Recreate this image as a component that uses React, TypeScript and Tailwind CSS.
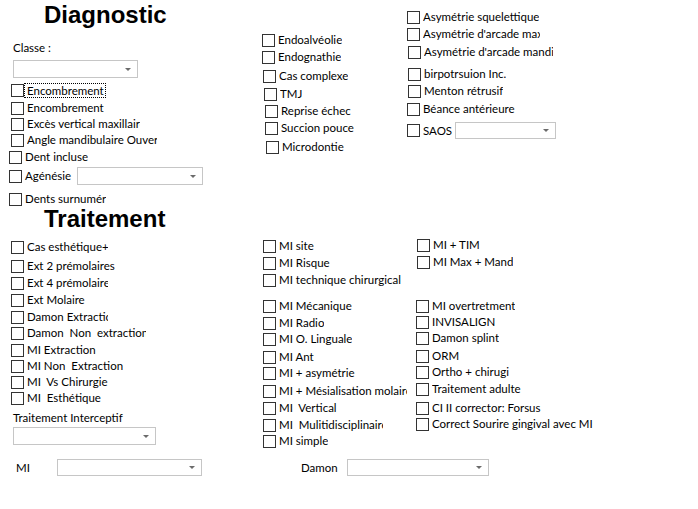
import React from 'react';

const ui = "font-['Lato',sans-serif] text-[11.5px] leading-[16px] text-black";

function Box() {
  return <span className="box-border size-[13px] shrink-0 border border-[#333333] bg-white" />;
}

function Combo({ className = '' }: { className?: string }) {
  return (
    <div className={`box-border flex shrink-0 items-center justify-end border border-[#c6c6c6] bg-white pr-[6px] ${className}`}>
      <span className="h-0 w-0 border-x-[3px] border-t-[3px] border-x-transparent border-t-[#6b6b6b]" />
    </div>
  );
}

function Check({ label, className = '', w = '', focused = false }: { label: string; className?: string; w?: string; focused?: boolean }) {
  return (
    <div className={`flex h-[16px] items-center ${className}`}>
      <Box />
      {focused ? (
        <span className="box-border h-[15px] whitespace-pre border border-dotted border-black pl-[2px] pr-[1px] leading-[13px]">{label}</span>
      ) : (
        <span className={`ml-[3px] overflow-hidden whitespace-pre ${w}`}>{label}</span>
      )}
    </div>
  );
}

function Title({ children }: { children: string }) {
  return (
    <div className="ml-[35px] h-[24px] font-['Liberation_Sans',Arial,sans-serif] text-[24px] font-bold leading-[24px]">
      {children}
    </div>
  );
}

export default function App() {
  return (
    <div className={`h-[509px] w-[698px] overflow-hidden bg-white ${ui}`}>
      {/* Diagnostic */}
      <div className="flex h-[207px] items-start">
        <div className="flex w-[262px] shrink-0 flex-col pl-[9px]">
          <div className="mt-[3px]"><Title>Diagnostic</Title></div>
          <div className="ml-[4px] mt-[13px] h-[16px]">Classe :</div>
          <Combo className="ml-[4px] mt-[4px] h-[18px] w-[125px]" />
          <Check label="Encombrement" focused className="ml-[2px] mt-[4px]" />
          <Check label="Encombrement" className="ml-[2px] mt-[2px]" />
          <Check label="Excès vertical maxillaire" w="w-[113px]" className="ml-[2px]" />
          <Check label="Angle mandibulaire Ouverte" w="w-[130px]" className="ml-[2px]" />
          <Check label="Dent incluse" className="mt-[1px]" />
          <div className="mt-[2px] flex h-[18px] items-center">
            <Box />
            <span className="ml-[3px] w-[52px] shrink-0">Agénésie</span>
            <Combo className="h-[18px] w-[126px]" />
          </div>
          <Check label="Dents surnuméraires" w="w-[81px]" className="mt-[6px]" />
        </div>

        <div className="flex w-[145px] shrink-0 flex-col">
          <Check label="Endoalvéolie" className="mt-[32px]" />
          <Check label="Endognathie" className="mt-[1px]" />
          <Check label="Cas complexe" className="ml-[1px] mt-[3px]" />
          <Check label="TMJ" className="ml-[2px] mt-[2px]" />
          <Check label="Reprise échec" className="ml-[3px] mt-[1px]" />
          <Check label="Succion pouce" className="ml-[3px] mt-[1px]" />
          <Check label="Microdontie" className="ml-[4px] mt-[3px]" />
        </div>

        <div className="flex flex-col">
          <Check label="Asymétrie squelettique" className="mt-[9px]" />
          <Check label="Asymétrie d'arcade maxillaire" w="w-[117px]" className="mt-[1px]" />
          <Check label="Asymétrie d'arcade mandibulaire" w="w-[129px]" className="ml-[1px] mt-[2px]" />
          <Check label="birpotrsuion Inc." className="ml-[1px] mt-[6px]" />
          <Check label="Menton rétrusif" className="ml-[1px] mt-[1px]" />
          <Check label="Béance antérieure" className="mt-[2px]" />
          <div className="mt-[5px] flex h-[17px] items-center">
            <Box />
            <span className="ml-[3px] w-[32px] shrink-0">SAOS</span>
            <Combo className="h-[17px] w-[101px]" />
          </div>
        </div>
      </div>

      {/* Traitement */}
      <div className="flex items-start">
        <div className="flex w-[263px] shrink-0 flex-col pl-[9px]">
          <Title>Traitement</Title>
          <Check label="Cas esthétique+" w="w-[81px]" className="ml-[2px] mt-[8px]" />
          <Check label="Ext 2 prémolaires" className="ml-[2px] mt-[3px]" />
          <Check label="Ext 4 prémolaires" w="w-[81px]" className="ml-[2px] mt-[1px]" />
          <Check label="Ext Molaire" className="ml-[2px] mt-[1px]" />
          <Check label="Damon Extraction" w="w-[81px]" className="ml-[2px] mt-[1px]" />
          <Check label="Damon  Non  extraction" w="w-[119px]" className="ml-[2px]" />
          <Check label="MI Extraction" className="ml-[2px] mt-[1px]" />
          <Check label="MI Non  Extraction" className="ml-[2px]" />
          <Check label="MI  Vs Chirurgie" className="ml-[2px]" />
          <Check label="MI  Esthétique" className="ml-[2px]" />
          <div className="ml-[4px] mt-[4px] h-[16px]">Traitement Interceptif</div>
          <Combo className="ml-[4px] mt-[1px] h-[18px] w-[143px]" />
          <div className="ml-[7px] mt-[14px] flex h-[17px] items-center">
            <span className="w-[41px] shrink-0">MI</span>
            <Combo className="h-[17px] w-[145px]" />
          </div>
        </div>

        <div className="flex w-[153px] shrink-0 flex-col">
          <Check label="MI site" className="mt-[31px]" />
          <Check label="MI Risque" className="mt-[1px]" />
          <Check label="MI technique chirurgicale" w="w-[122px]" className="mt-[1px]" />
          <Check label="MI Mécanique" className="mt-[10px]" />
          <Check label="MI Radio" className="mt-[1px]" />
          <Check label="MI O. Linguale" />
          <Check label="MI Ant" className="mt-[2px]" />
          <Check label="MI + asymétrie" />
          <Check label="MI + Mésialisation molaire" w="w-[128px]" className="mt-[2px]" />
          <Check label="MI  Vertical" className="mt-[1px]" />
          <Check label="MI  Mulitidisciplinaire" w="w-[104px]" className="mt-[1px]" />
          <Check label="MI simple" />
          <div className="ml-[38px] mt-[10px] flex h-[17px] items-center">
            <span className="w-[46px] shrink-0">Damon</span>
            <Combo className="h-[17px] w-[142px]" />
          </div>
        </div>

        <div className="flex flex-col">
          <Check label="MI + TIM" className="ml-[1px] mt-[30px]" />
          <Check label="MI Max + Mand" className="ml-[1px] mt-[1px]" />
          <Check label="MI overtretment" className="mt-[28px]" />
          <Check label="INVISALIGN" />
          <Check label="Damon splint" />
          <Check label="ORM" className="mt-[2px]" />
          <Check label="Ortho + chirugi" />
          <Check label="Traitement adulte" className="mt-[1px]" />
          <Check label="CI II corrector: Forsus" className="mt-[3px]" />
          <Check label="Correct Sourire gingival avec MI" />
        </div>
      </div>
    </div>
  );
}
